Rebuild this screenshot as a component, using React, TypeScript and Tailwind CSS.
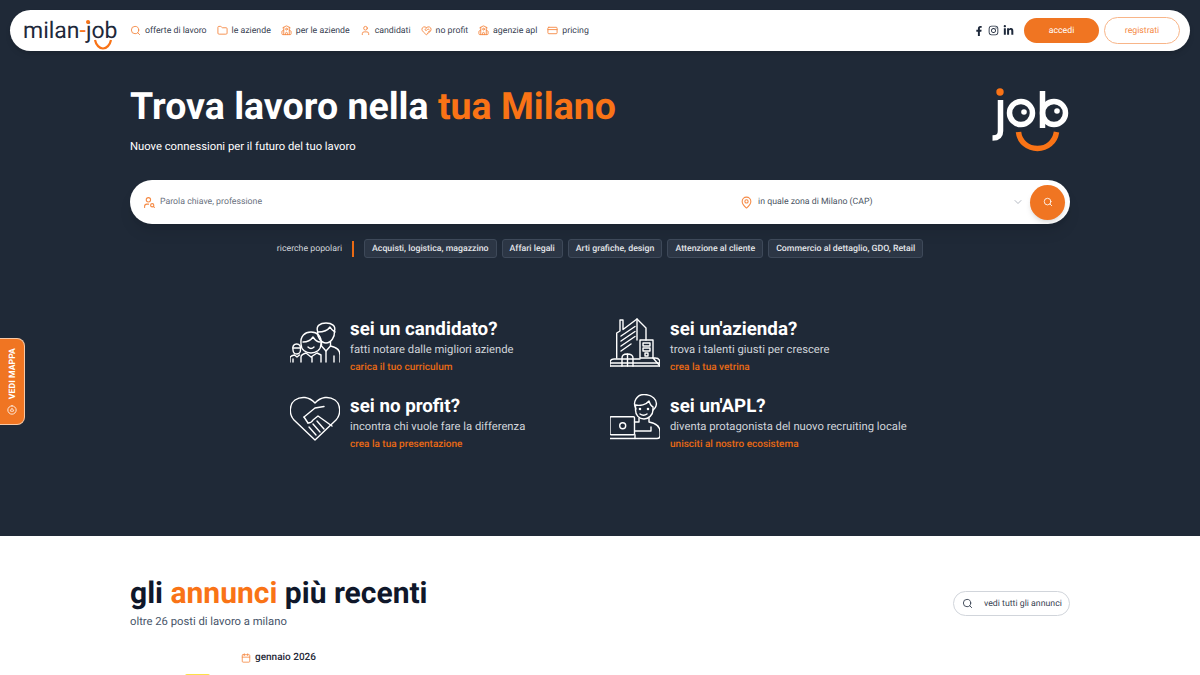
import { Calendar, ChevronDown, CreditCard, CirclePlay, MapPin, Search, User, UserSearch, School, HeartHandshake, Folder } from "lucide-react";
import { FaFacebookF, FaInstagram, FaLinkedinIn } from "react-icons/fa";
import type { ReactNode } from "react";

const navIcon = "h-[11px] w-[11px]";

const nav = [
  { label: "offerte di lavoro", icon: <Search className={navIcon} strokeWidth={2} /> },
  { label: "le aziende", icon: <Folder className={navIcon} strokeWidth={2} /> },
  { label: "per le aziende", icon: <School className={navIcon} strokeWidth={2} /> },
  { label: "candidati", icon: <User className={navIcon} strokeWidth={2} /> },
  { label: "no profit", icon: <HeartHandshake className={navIcon} strokeWidth={2} /> },
  { label: "agenzie apl", icon: <School className={navIcon} strokeWidth={2} /> },
  { label: "pricing", icon: <CreditCard className={navIcon} strokeWidth={2} /> },
];

const popular = [
  "Acquisti, logistica, magazzino",
  "Affari legali",
  "Arti grafiche, design",
  "Attenzione al cliente",
  "Commercio al dettaglio, GDO, Retail",
];

function JobMark() {
  return (
    <svg className="block" width="77" height="64" viewBox="0 0 77 64" fill="none">
      <circle cx="8" cy="4" r="3.7" fill="#f97316" />
      <path d="M8.5 12V43C8.5 48 6 50 0.5 50" stroke="white" strokeWidth="5.5" />
      <circle cx="29" cy="25" r="11.5" stroke="white" strokeWidth="5.5" />
      <circle cx="32" cy="24" r="2.8" fill="white" />
      <path d="M50.5 3V40" stroke="white" strokeWidth="5.5" />
      <circle cx="62" cy="25" r="11.5" stroke="white" strokeWidth="5.5" />
      <circle cx="65" cy="23" r="2.8" fill="white" />
      <path d="M26.5 44C27.5 54 36 60.5 45.5 60.5C55 60.5 63 54 64.5 44" stroke="#f97316" strokeWidth="5.5" />
    </svg>
  );
}

function Candidate() {
  return (
    <svg width="50" height="50" viewBox="0 0 50 50" fill="none" stroke="white" strokeWidth="1.4" strokeLinejoin="round" strokeLinecap="round">
      <path d="M27.5 14C26 9 30 6 36 6C42 6 46 9 44.5 14C45 20 41 26 36 26C31 26 27 20 27.5 14Z" />
      <path d="M28 15C33 15 38 13 40 10C41 12 43 14 45 15" />
      <path d="M31.5 25V29L36 34L40.5 29V25" />
      <path d="M40.5 29C46 30 50 32 50 38V45M36 34V45M44 39V45" />
      <path d="M11 27C10 19 15 15 21 15C27 15 32 19 31 27C31 33 26 36 21 36C16 36 11 33 11 27Z" />
      <path d="M13 25C17 25 21 23 23 20C25 23 27 25 30 25" />
      <path d="M18 30C20 32 22 32 24 30" />
      <path d="M11 45V40C11 38 13 37 16 36L21 40L27 36L31 38V45M22 40V45" />
      <path d="M3 33C2 29 4 27 6.7 27C9.5 27 11 29 10.5 33C10.5 35.5 8.5 37 6.7 37C5 37 3.2 35.5 3 33Z" />
      <path d="M3 31H10.5" />
      <path d="M0 45V41C0 39.5 2 38.5 4.5 38L7 40L9.5 38M3 42V45" />
    </svg>
  );
}

function Heart() {
  return (
    <svg width="50" height="50" viewBox="0 0 50 50" fill="none" stroke="white" strokeWidth="1.4" strokeLinejoin="round" strokeLinecap="round">
      <path d="M25 46L4 26C-1.5 20 -0.5 10 5 6C11 2 19 2.5 25 9C31 2.5 39 2 45 6C50.5 10 51.5 20 46 26Z" />
      <path d="M14 23L25 14L34 12.5" />
      <path d="M18 29C20 29 22 28 23 26L28 22L42 32" />
      <path d="M14 23L18 29" />
      <path d="M26 41L19 33M30 38L23 30M34 35L27 27" />
    </svg>
  );
}

function Company() {
  return (
    <svg width="50" height="50" viewBox="0 0 50 50" fill="none" stroke="white" strokeWidth="1.4" strokeLinejoin="round" strokeLinecap="round">
      <path d="M6.7 41V16L10 14V3H13V12.5L27 2L36 11V23" />
      <path d="M27 2V23" />
      <path d="M11 19L25 9.5M11 24L25 14.5M11 29L25 19.5M11 34L21 27" />
      <rect x="30" y="23" width="13" height="18" />
      <path d="M33 26H40V29H33ZM33 31H40V34H33ZM35 36H38V39H35Z" />
      <path d="M0 49V46C0 43 2 42 4 42H30M43 41H45C48 41 50 43 50 46V49Z" />
      <path d="M0 46H50M0 49H50" />
      <path d="M12 49V41C12 38 14 37 17 37C20 37 23 38 23 41V49M17.5 37V49" />
    </svg>
  );
}

function Apl() {
  return (
    <svg width="50" height="50" viewBox="0 0 50 50" fill="none" stroke="white" strokeWidth="1.4" strokeLinejoin="round" strokeLinecap="round">
      <path d="M26 15C22 8 27 0.5 34 0.5C42 0.5 48 6 46 12C45.5 14 44 15 43 16" />
      <path d="M25.5 11C30 12 36 11 39 7C40 10 41 12 43 13V16C43 21 38.5 25 34 25C29 25 25.5 21 25.5 16V11Z" />
      <circle cx="30" cy="15" r="0.6" />
      <circle cx="38" cy="15" r="0.6" />
      <path d="M30 20C32 21.5 35 21.5 37 20" />
      <path d="M29 24V28H24.5M39 24V28C45 29 50 32 50 38V42C50 44 49 44.5 47 44.5H25" />
      <rect x="0" y="22.7" width="24.5" height="18" rx="1" />
      <circle cx="12.7" cy="31.7" r="3" />
      <path d="M0 44.5H25V40.7M25 37H41V33" />
    </svg>
  );
}

function Cta({ art, title, sub, link }: { art: ReactNode; title: string; sub: string; link: string }) {
  return (
    <div className="flex items-start gap-[10px]">
      <div className="-mt-[1px] h-[50px] w-[50px] shrink-0">{art}</div>
      <div className="flex flex-col">
        <div className="text-[18.75px] font-bold leading-[22px] text-white">{title}</div>
        <div className="mt-[2px] text-[11.25px] leading-[15px] text-[#d1d5db]">{sub}</div>
        <div className="mt-[4px] text-[10px] font-medium leading-[14px] text-[#ea6a14]">{link}</div>
      </div>
    </div>
  );
}

export default function App() {
  return (
    <div className="h-[675px] overflow-hidden bg-white font-['Roboto',sans-serif] [text-rendering:geometricPrecision]">
      <div className="relative h-[536px] bg-[#1f2937] px-[10px] pt-[10px]">
        <header className="flex h-[41px] items-center rounded-full bg-white pl-[13px] pr-[10px] shadow-md">
          <div className="relative w-[93px] shrink-0 whitespace-nowrap text-[23px] leading-none text-[#1e293b]">
            milan<span className="text-[#f97316]">-</span>job
            <span className="absolute left-[63px] top-[1px] h-[4px] w-[4px] rounded-full bg-[#f97316]" />
            <svg className="absolute left-[70px] top-[20px]" width="20" height="12" viewBox="0 0 20 12" fill="none">
              <path d="M2 1C3 6 6.5 9.5 10 9.5C13.5 9.5 17 6 18 1" stroke="#f97316" strokeWidth="2.2" />
            </svg>
          </div>
          <nav className="ml-[14px] flex items-center gap-[10px]">
            {nav.map((n) => (
              <div key={n.label} className="flex items-center gap-[4px] whitespace-nowrap text-[8.75px] leading-none text-[#374151]">
                <span className="text-[#f58a45]">{n.icon}</span>
                <span className="pt-[1px]">{n.label}</span>
              </div>
            ))}
          </nav>
          <div className="ml-auto flex items-center text-[#1e293b]">
            <FaFacebookF className="h-[10px] w-[10px]" />
            <FaInstagram className="ml-[4px] h-[11px] w-[11px]" />
            <FaLinkedinIn className="ml-[4px] h-[11px] w-[11px]" />
            <div className="ml-[10px] flex h-[25px] w-[75px] items-center justify-center rounded-full bg-[#f07522] pt-[2px] text-[8.75px] text-white">
              accedi
            </div>
            <div className="ml-[5px] flex h-[27px] w-[76px] items-center justify-center rounded-full border border-[#f8b588] pt-[2px] text-[8.75px] text-[#f58a45]">
              registrati
            </div>
          </div>
        </header>

        <div className="absolute left-0 top-[338px] flex h-[87px] w-[25px] flex-col items-center rounded-r-[8px] border border-l-0 border-[#f9c9a5] bg-[#f07522] pt-[9px] text-white">
          <span className="ml-[2px] rotate-180 text-[8.75px] font-bold leading-none [writing-mode:vertical-rl]">VEDI MAPPA</span>
          <CirclePlay className="mt-[6px] h-[10px] w-[10px] -rotate-90" />
        </div>

        <div className="mx-auto mt-[35px] w-[940px]">
          <div className="flex items-start justify-between">
            <div>
              <h1 className="text-[37.5px] font-bold leading-[42px] text-white">
                Trova lavoro nella <span className="text-[#f97316]">tua Milano</span>
              </h1>
              <p className="mt-[11px] text-[11.25px] leading-[16px] text-white">
                Nuove connessioni per il futuro del tuo lavoro
              </p>
            </div>
            <div className="mt-[2px] pr-[1px]">
              <JobMark />
            </div>
          </div>

          <div className="mt-[25px] flex h-[44px] items-center rounded-[22px] bg-white pl-[13px] pr-[5px] shadow-lg">
            <UserSearch className="h-[13px] w-[13px] text-[#f58a45]" strokeWidth={2} />
            <span className="ml-[4px] whitespace-nowrap pt-[2px] text-[8.75px] text-[#6b7280]">Parola chiave, professione</span>
            <MapPin className="ml-[478px] h-[13px] w-[13px] text-[#f58a45]" strokeWidth={2} />
            <span className="ml-[5px] whitespace-nowrap pt-[2px] text-[8.75px] text-[#4b5563]">in quale zona di Milano (CAP)</span>
            <ChevronDown className="ml-auto h-[12px] w-[12px] text-[#9ca3af]" strokeWidth={1.5} />
            <div className="ml-[6px] flex h-[35px] w-[35px] items-center justify-center rounded-full bg-[#f07522] text-white shadow-md">
              <Search className="h-[10px] w-[10px]" strokeWidth={2} />
            </div>
          </div>

          <div className="mt-[15px] flex items-center justify-center">
            <span className="pt-[2px] text-[8.75px] text-[#d1d5db]">ricerche popolari</span>
            <span className="ml-[10px] h-[16px] w-[2px] bg-[#ea6a14]" />
            <div className="ml-[10px] flex gap-[5px]">
              {popular.map((p) => (
                <span key={p} className="flex h-[19px] items-center whitespace-nowrap rounded-[3px] border border-[#3e4959] bg-[#2c3645] px-[7px] pt-[2px] text-[8.75px] font-medium text-[#e5e7eb]">
                  {p}
                </span>
              ))}
            </div>
          </div>

          <div className="ml-[160px] mt-[60px] grid grid-cols-[320px_1fr] gap-y-[20px]">
            <Cta art={<Candidate />} title="sei un candidato?" sub="fatti notare dalle migliori aziende" link="carica il tuo curriculum" />
            <Cta art={<Company />} title="sei un'azienda?" sub="trova i talenti giusti per crescere" link="crea la tua vetrina" />
            <Cta art={<Heart />} title="sei no profit?" sub="incontra chi vuole fare la differenza" link="crea la tua presentazione" />
            <Cta art={<Apl />} title="sei un'APL?" sub="diventa protagonista del nuovo recruiting locale" link="unisciti al nostro ecosistema" />
          </div>
        </div>
      </div>

      <section className="mx-auto w-[940px] pt-[40px]">
        <div className="flex items-center justify-between">
          <div>
            <h2 className="text-[30px] font-bold leading-[36px] text-[#0f172a]">
              gli <span className="text-[#f97316]">annunci</span> più recenti
            </h2>
            <p className="mt-[1px] text-[11.25px] leading-[18px] text-[#475569]">oltre 26 posti di lavoro a milano</p>
          </div>
          <div className="flex h-[25px] w-[117px] items-center whitespace-nowrap rounded-full border border-[#d1d5db] pl-[8px] text-[8.75px] text-[#374151]">
            <Search className="h-[11px] w-[11px]" strokeWidth={2} />
            <span className="ml-[11px] pt-[2px]">vedi tutti gli annunci</span>
          </div>
        </div>
        <div className="ml-[111px] mt-[20px] flex items-center gap-[4px] text-[10px] font-medium leading-[14px] text-[#1f2937]">
          <Calendar className="h-[10px] w-[10px] text-[#f58a45]" strokeWidth={2} />
          gennaio 2026
        </div>
        <div className="ml-[55px] mt-[9px] h-[8px] w-[25px] rounded-[2px] bg-[#fde047]" />
      </section>
    </div>
  );
}
